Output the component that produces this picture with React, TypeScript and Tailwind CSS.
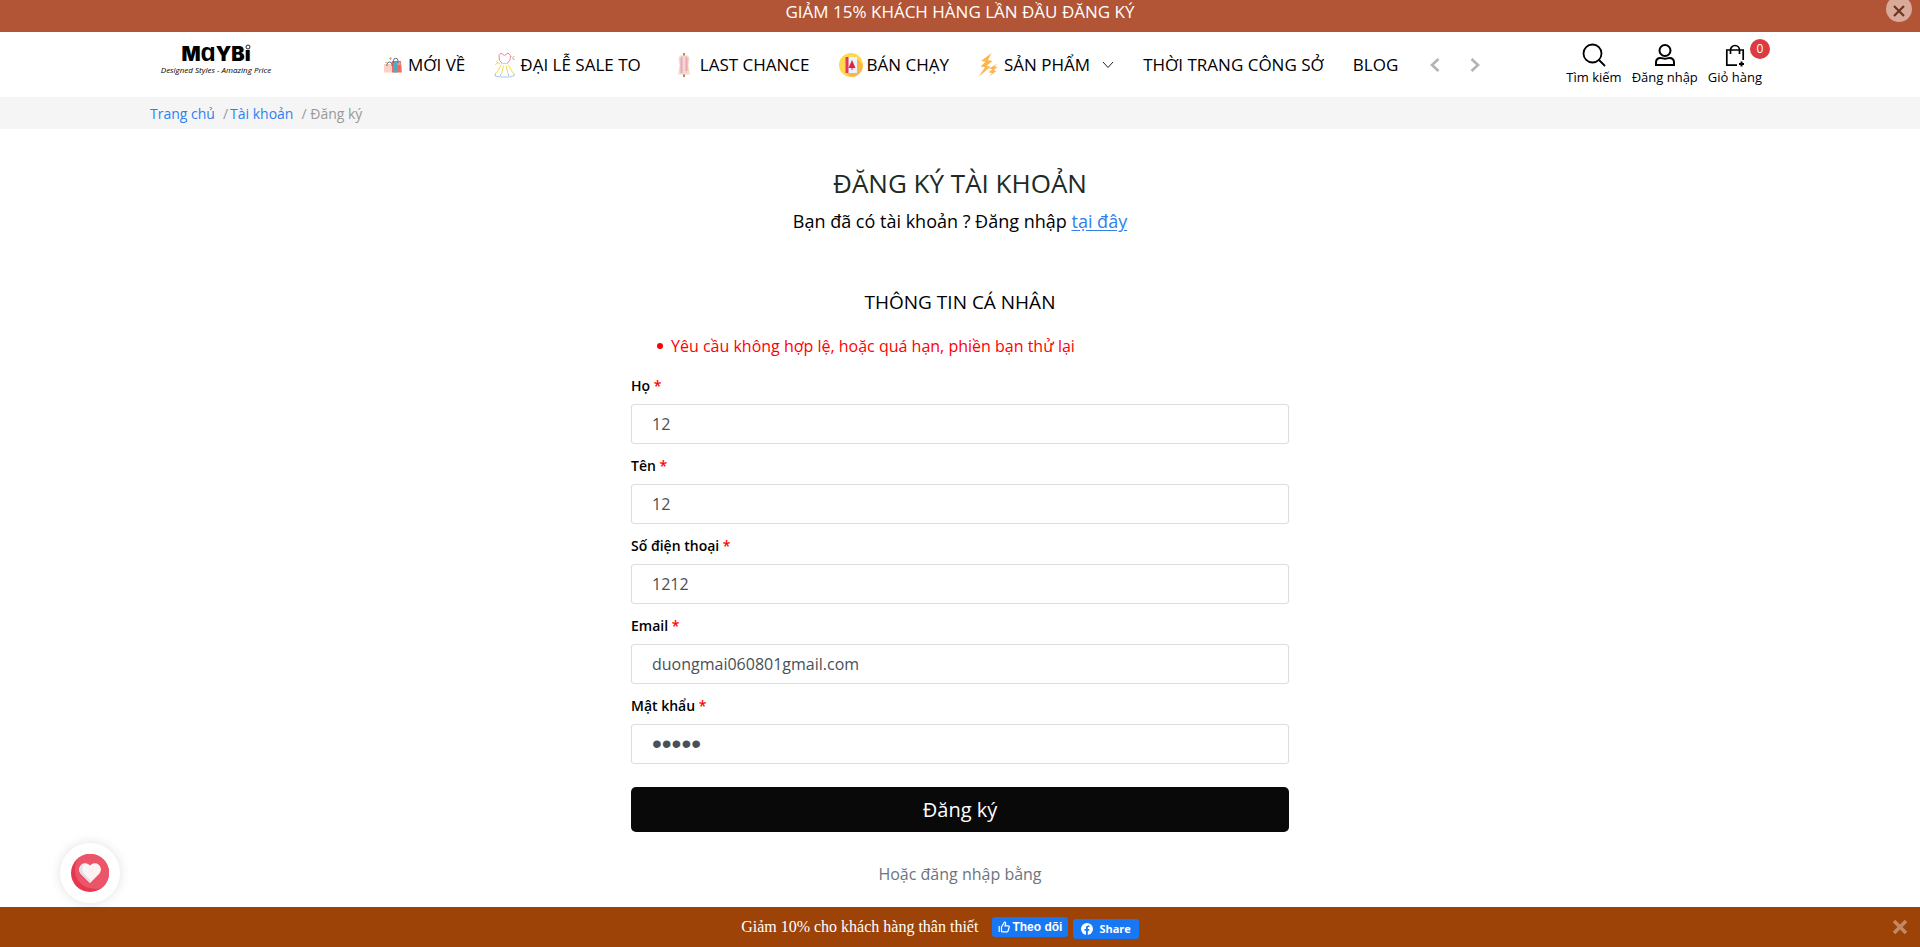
import { useState } from "react";
import type { ReactNode } from "react";

type NavItem = { label: string; icon?: ReactNode; menu?: boolean; pad: string };

function BagsIcon() {
  return (
    <svg viewBox="0 0 18 16" className="h-4 w-[18px]" aria-hidden="true">
      <path d="M0 7h10l-.5 8.500H0z" fill="#fbd3c4" />
      <path d="M8 4h9l.8 11.500H8z" fill="#ee6a66" />
      <path d="M10 4h3v11.500h-3z" fill="#54a9bd" />
      <path d="M13.500 5h3v3h-3z" fill="#f49a8d" />
      <path d="M3 9V7.500a2.500 2.500 0 0 1 5 0V9M9.500 6V3.500a2.200 2.200 0 0 1 4.400 0V6" fill="none" stroke="#5b6798" strokeWidth="1" />
      <path d="M6.500 0v3M5 1.500h3M1 5.500h1.500M16.500 9h1.500" stroke="#f5b53c" strokeWidth="1" />
    </svg>
  );
}

function DressIcon() {
  return (
    <svg viewBox="0 0 22 26" className="h-[26px] w-[22px]" fill="none" strokeWidth="1" aria-hidden="true">
      <path d="M8 11 5.500 8.500 5 3.500 7 1l3.500 2.500L14 1l2.500 2.500L16 8l-2.500 3" stroke="#f2879a" />
      <path d="M17.500 4.500l3 3M19 8l1-4" stroke="#f29a6c" strokeDasharray="2 1" />
      <path d="M7.500 11.500h6.500M7.500 12.500 2.500 21M14 12.500l5 8.500M9.500 13.500 7.500 22M12 13.500l2 8.500M2 9l4 3M1 12.500l3-1.500" stroke="#f0dc4a" />
      <path d="M1.500 21 1 24l5.500 1h9l5-1.500-1-2.500M6.500 22v2M14.500 22v2" stroke="#a9c4ef" />
    </svg>
  );
}

function ScarfIcon() {
  return (
    <svg viewBox="0 0 12 24" className="h-6 w-3" aria-hidden="true">
      <path d="M6 0v24" stroke="#b9826a" strokeWidth="2" />
      <path d="M2 2.500h8L11.500 6l-1 6 1.300 9.500H.2L1.500 12l-1-6z" fill="#ecdccb" />
      <path d="M2.500 5 4.500 3v17h-2zM7.500 3l2 2v13h-2z" fill="#f2a3bb" />
    </svg>
  );
}

function HotIcon() {
  return (
    <svg viewBox="0 0 24 24" className="size-6" aria-hidden="true">
      <circle cx="12" cy="12" r="12" fill="#fdd94f" />
      <path d="M12 24a12 12 0 0 0 12-12L17 5v15H7z" fill="#fbb64b" />
      <path d="M6.500 4h3.500v16H6.500z" fill="#e2395a" />
      <path d="M9.500 4H18v16H9.500z" fill="#edf1fb" />
      <path d="M13 7l3.500 8H9.500z" fill="#dc2443" />
      <path d="M12 15h2v2h-2z" fill="#f0859a" />
    </svg>
  );
}

function BoltsIcon() {
  return (
    <svg viewBox="0 0 20 24" className="h-6 w-5" fill="#fcb64e" aria-hidden="true">
      <path d="M13.500 0 3 8l4.500.8-5 4.700 4.500.8L.500 24l12-10.200-4-1L14.500 8 10 7z" />
      <path d="M19.500 10.500 11 15.500l3.500.8-4 3 3.500.7-3.500 4 8-6-3-.8L19.500 14l-3-.5z" />
    </svg>
  );
}

const nav: NavItem[] = [
  { label: "MỚI VỀ", icon: <BagsIcon />, pad: "gap-1.5" },
  { label: "ĐẠI LỄ SALE TO", icon: <DressIcon />, pad: "gap-1" },
  { label: "LAST CHANCE", icon: <ScarfIcon />, pad: "gap-2.5 pl-2" },
  { label: "BÁN CHẠY", icon: <HotIcon />, pad: "gap-1" },
  { label: "SẢN PHẨM", icon: <BoltsIcon />, menu: true, pad: "gap-1.5" },
  { label: "THỜI TRANG CÔNG SỞ", pad: "gap-2" },
  { label: "BLOG", pad: "gap-2" },
];

const fields = [
  { id: "lastName", label: "Họ", type: "text", value: "12" },
  { id: "firstName", label: "Tên", type: "text", value: "12" },
  { id: "phone", label: "Số điện thoại", type: "tel", value: "1212" },
  { id: "email", label: "Email", type: "text", value: "duongmai060801gmail.com" },
  { id: "password", label: "Mật khẩu", type: "password", value: "12345" },
];

function Logo() {
  return (
    <a href="#" className="flex w-[120px] flex-col items-center font-['Inter',sans-serif] text-black" aria-label="MAYBI">
      <span className="flex items-baseline text-[20px] leading-5 font-black">
        <span>M</span>
        <span className="font-['Liberation_Sans',sans-serif] text-[25px] font-bold">ɑ</span>
        <span>YB</span>
        <span className="relative">
          ı
          <svg viewBox="0 0 6 6" className="absolute top-0 left-0 size-1.5" aria-hidden="true">
            <circle cx="3" cy="3" r="2" fill="none" stroke="#222" strokeWidth="1" />
          </svg>
        </span>
      </span>
      <span className="font-['Open_Sans',sans-serif] text-[8px] leading-3 font-medium whitespace-nowrap italic">Designed Styles - Amazing Price</span>
    </a>
  );
}

function Chevron({ d }: { d: string }) {
  return (
    <svg viewBox="0 0 10 14" className="h-3.5 w-2.5" fill="none" stroke="#b3b3b3" strokeWidth="2.600" aria-hidden="true">
      <path d={d} />
    </svg>
  );
}

function Header() {
  return (
    <header className="bg-white">
      <div className="mx-auto flex h-[65px] max-w-[1620px] items-center">
        <div className="w-[230px] shrink-0 self-start pt-2.5 pl-1.5">
          <Logo />
        </div>
        <nav className="flex grow items-center justify-between pl-1 text-[17px] whitespace-nowrap text-black">
          {nav.map((item) => (
            <a key={item.label} href="#" className={`flex items-center ${item.pad}`}>
              {item.icon}
              {item.label}
              {item.menu && (
                <svg viewBox="0 0 12 8" className="ml-1.5 h-2 w-3" fill="none" stroke="#222" strokeWidth="1" aria-hidden="true">
                  <path d="M1 1l5 5.500L11 1" />
                </svg>
              )}
            </a>
          ))}
        </nav>
        <div className="flex shrink-0 gap-[30px] pr-[86px] pl-8">
          <button type="button" aria-label="Trước">
            <Chevron d="M8.500 1 2 7l6.500 6" />
          </button>
          <button type="button" aria-label="Sau">
            <Chevron d="M1.500 1 8 7l-6.500 6" />
          </button>
        </div>
        <div className="flex shrink-0 gap-2.5 pr-2 text-[13px] leading-5 whitespace-nowrap text-black">
          <a href="#" className="flex flex-col items-center">
            <svg viewBox="0 0 24 24" className="size-6" fill="none" stroke="currentColor" strokeWidth="1.800" aria-hidden="true">
              <circle cx="10.500" cy="10.500" r="9" />
              <path d="M17 17l6 6" />
            </svg>
            Tìm kiếm
          </a>
          <a href="#" className="flex flex-col items-center">
            <svg viewBox="0 0 24 24" className="size-6" fill="none" stroke="currentColor" strokeWidth="2" aria-hidden="true">
              <circle cx="12" cy="7.500" r="5.500" />
              <path d="M3 22v-2.500c0-3 2-4.500 4.500-4.500 2 0 2.500.8 4.500.8s2.500-.8 4.500-.8c2.500 0 4.500 1.500 4.500 4.500V22z" />
            </svg>
            Đăng nhập
          </a>
          <a href="#" className="relative flex flex-col items-center">
            <svg viewBox="0 0 24 24" className="size-6" fill="none" stroke="currentColor" strokeWidth="1.700" aria-hidden="true">
              <path d="M14 22.200H3.800V7h16.400v10M7.500 11V7a4.500 4.500 0 0 1 9 0v4" />
              <path d="M18.500 18.500v5M16 21h5" strokeWidth="2" />
            </svg>
            Giỏ hàng
            <span className="absolute -top-1 -right-2 flex size-5 items-center justify-center rounded-full bg-[#dc3c3f] text-[12px] text-white">0</span>
          </a>
        </div>
      </div>
    </header>
  );
}

function TopBanner() {
  return (
    <div className="relative flex h-8 justify-center overflow-hidden bg-[#b25436] text-[17px] leading-6 text-white">
      GIẢM 15% KHÁCH HÀNG LẦN ĐẦU ĐĂNG KÝ
      <button type="button" aria-label="Đóng" className="absolute -top-1 right-2 flex size-[26px] items-center justify-center rounded-full bg-[#d9a999] pt-1">
        <svg viewBox="0 0 12 12" className="size-3" stroke="#6c3422" strokeWidth="2.200" aria-hidden="true">
          <path d="M1 1l10 10M11 1 1 11" />
        </svg>
      </button>
    </div>
  );
}

function RegisterForm() {
  const [values, setValues] = useState<Record<string, string>>(Object.fromEntries(fields.map((f) => [f.id, f.value])));
  return (
    <main className="mx-auto w-full max-w-[658px] grow pt-[34px] text-[16px] text-black">
      <h1 className="text-center text-[26px] leading-10 text-[#212b25]">ĐĂNG KÝ TÀI KHOẢN</h1>
      <p className="pt-0.5 text-center text-[18px] leading-8">
        Bạn đã có tài khoản ? Đăng nhập{" "}
        <a href="#" className="text-[#2f80ed] underline underline-offset-2">
          tại đây
        </a>
      </p>
      <form onSubmit={(e) => e.preventDefault()}>
        <h2 className="pt-[49px] text-center text-[19px] leading-8">THÔNG TIN CÁ NHÂN</h2>
        <ul className="mt-4 mb-[18px] pl-[26px] leading-6 text-[#ff0000]">
          <li className="flex items-center gap-2 before:size-1.5 before:rounded-full before:bg-current">
            Yêu cầu không hợp lệ, hoặc quá hạn, phiền bạn thử lại
          </li>
        </ul>
        {fields.map((f) => (
          <div key={f.id} className="mb-3 flex flex-col">
            <label htmlFor={f.id} className="mb-2 text-[14px] leading-5 font-semibold">
              {f.label} <span className="text-[#ff0000]">*</span>
            </label>
            <input
              id={f.id}
              type={f.type}
              value={values[f.id]}
              onChange={(e) => setValues({ ...values, [f.id]: e.target.value })}
              className={`h-10 w-full rounded-[3px] border border-[#dddddd] bg-white px-5 text-[#495057] outline-none ${f.type === "password" ? "font-['Liberation_Sans',sans-serif] text-[28px]" : "text-[16px]"}`}
            />
          </div>
        ))}
        <button type="submit" className="mt-[11px] h-[45px] w-full rounded-[5px] bg-[#090909] text-[20px] text-white">
          Đăng ký
        </button>
      </form>
      <p className="pt-[30px] text-center leading-6 text-[#6c757d]">Hoặc đăng nhập bằng</p>
    </main>
  );
}

function BottomBar() {
  return (
    <footer className="fixed inset-x-0 bottom-0 flex h-10 items-center justify-center bg-[#9d4308] pr-10 text-white">
      <span className="pr-3.5 font-['Liberation_Serif',serif] text-[16px] leading-6">Giảm 10% cho khách hàng thân thiết</span>
      <div className="flex items-center gap-[5px] font-['Liberation_Sans',sans-serif] text-[12px] leading-5 font-bold">
        <button type="button" className="flex h-5 items-center gap-0.5 rounded-[3px] bg-[#1877f2] px-1.5">
          <svg viewBox="0 0 12 12" className="size-3" fill="none" stroke="#fff" strokeWidth="1.200" aria-hidden="true">
            <path d="M1.200 5v6M3.500 10.500V6L6.500 1c1.200 0 1.300 1 1 2L7 4.800h3.200c1 0 1.200.8 1 1.500L10 10c-.2.6-.6.800-1.200.8H5z" />
          </svg>
          Theo dõi
        </button>
        <button type="button" className="mt-1 flex h-5 items-center gap-1.5 rounded-[3px] bg-[#1877f2] px-2 font-['Open_Sans',sans-serif] text-[11px]">
          <svg viewBox="0 0 12 12" className="size-3" aria-hidden="true">
            <circle cx="6" cy="6" r="6" fill="#fff" />
            <path d="M5 12V7.800H3.500V6H5V4.800C5 3.200 5.900 2.400 7.300 2.400l1.200.1V4h-.7c-.8 0-1 .4-1 .9V6h1.600l-.3 1.800H6.800V12z" fill="#1877f2" />
          </svg>
          Share
        </button>
      </div>
      <button type="button" aria-label="Đóng" className="absolute right-[13px]">
        <svg viewBox="0 0 14 14" className="size-3.5" stroke="#c28a63" strokeWidth="3.500" aria-hidden="true">
          <path d="M1 1l12 12M13 1 1 13" />
        </svg>
      </button>
    </footer>
  );
}

export default function App() {
  return (
    <div className="flex min-h-screen flex-col bg-white font-['Open_Sans',sans-serif]">
      <TopBanner />
      <Header />
      <div className="bg-[#f5f5f5]">
        <nav aria-label="Breadcrumb" className="mx-auto flex h-8 max-w-[1620px] items-center text-[14px] text-[#2f80ed]">
          <a href="#">Trang chủ</a>
          <span className="pr-0.5 pl-2 text-[#999999]">/</span>
          <a href="#">Tài khoản</a>
          <span className="pl-2 text-[#999999]">/ Đăng ký</span>
        </nav>
      </div>
      <RegisterForm />
      <BottomBar />
      <button
        type="button"
        aria-label="Yêu thích"
        className="fixed bottom-11 left-[60px] flex size-[60px] items-center justify-center rounded-full bg-white shadow-[0_0_12px_rgba(0,0,0,0.12)]"
      >
        <svg viewBox="0 0 38 38" className="size-[38px]" aria-hidden="true">
          <circle cx="19" cy="19" r="19" fill="#e5384f" />
          <path d="M7 4.300A19 19 0 1 1 30 34.500C15 37 4 28 4 16c0-5 1-9 3-11.700z" fill="#ec5569" />
          <path d="M19 29 9.500 19.500a6 6 0 0 1 9.500-8 6 6 0 0 1 9.500 8z" fill="#fdf3f3" />
          <path d="M19 29 9.500 19.500A6 6 0 0 1 14 10c-3 2-4 6-1 9.500l7.500 8z" fill="#dbe2ea" />
        </svg>
      </button>
    </div>
  );
}
